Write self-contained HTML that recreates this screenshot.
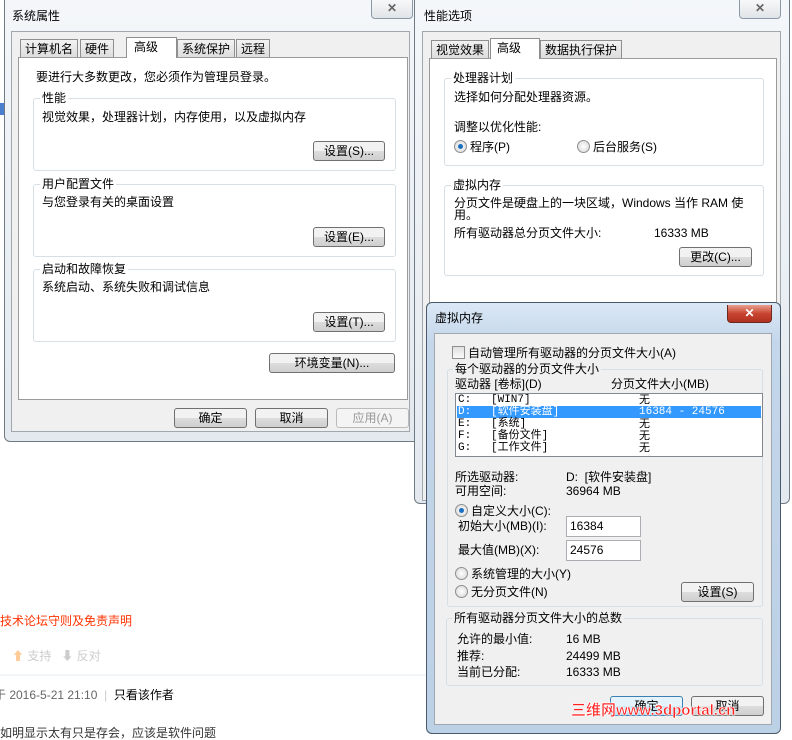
<!DOCTYPE html>
<html><head><meta charset="utf-8"><style>
*{margin:0;padding:0;box-sizing:border-box}
body{width:792px;height:730px;overflow:hidden;background:#fff;position:relative;font:12px "Liberation Sans","Noto Sans CJK SC",sans-serif;color:#000}
.a{position:absolute;white-space:nowrap;line-height:14px}
.frame{position:absolute;background:linear-gradient(#f4f7fa,#e3e9ef);border:1px solid #707a84;border-radius:6px}
.client{position:absolute;background:#f0f0f0;border:1px solid #a0a7ae}
.panel{position:absolute;background:#fff;border:1px solid #9a9a9a}
.tab{position:absolute;height:19px;border:1px solid #8e8f8f;border-bottom:none;background:linear-gradient(#f2f2f2,#dcdcdc);padding:2px 4px;line-height:14px}
.tab.on{background:#fff;height:21px;z-index:2}
.grp{position:absolute;border:1px solid #d5dfe5;border-radius:3px}
.btn{position:absolute;height:20px;border:1px solid #707070;border-radius:3px;background:linear-gradient(#f2f2f2 50%,#dddddd 50%,#cfcfcf);text-align:center;line-height:18px}
.close{position:absolute;border:1px solid #8c9aa8;border-top:none;border-radius:0 0 4px 4px;background:linear-gradient(#f8f8f8,#e0e4e8);color:#666;text-align:center;font-weight:bold;line-height:16px}
.radio{position:absolute;width:13px;height:13px;border-radius:50%;border:1px solid #8e8f8f;background:radial-gradient(#fff,#d4d4d4)}
.radio.on::after{content:"";position:absolute;left:3px;top:3px;width:5px;height:5px;border-radius:50%;background:#1a6fc0}
.inp{position:absolute;background:#fff;border:1px solid #abadb3;padding:2px 3px;line-height:14px}
</style></head><body>
<div class="a" style="left:0;top:614px;color:#ff3300">技术论坛守则及免责声明</div>
<div class="a" style="left:12px;top:649px;color:#ccc"><span style="color:#fc9">⬆</span> 支持 &nbsp; ⬇ 反对</div>
<div style="position:absolute;left:0;top:674px;width:430px;height:2px;background:#f3f6f9"></div>
<div class="a" style="left:-6px;top:688px;color:#666">于 2016-5-21 21:10 &nbsp;<span style="color:#ccc">|</span>&nbsp; <span style="color:#000">只看该作者</span></div>
<div class="a" style="left:0;top:726px;color:#333">如明显示太有只是存会，应该是软件问题</div>
<div style="position:absolute;left:0;top:103px;width:5px;height:12px;background:#4a7fd0"></div>

<div class="frame" style="left:4px;top:-6px;width:416px;height:448px"></div>
<div class="a" style="left:12px;top:9px">系统属性</div>
<div class="close" style="left:371px;top:0;width:42px;height:19px">✕</div>
<div class="client" style="left:11px;top:31px;width:399px;height:401px"></div>
<div class="tab" style="left:20px;top:39px">计算机名</div>
<div class="tab" style="left:80px;top:39px">硬件</div>
<div class="tab on" style="left:126px;top:37px;width:51px;padding-left:7px">高级</div>
<div class="tab" style="left:177px;top:39px">系统保护</div>
<div class="tab" style="left:236px;top:39px">远程</div>
<div class="panel" style="left:18px;top:57px;width:390px;height:343px"></div>
<div class="a" style="left:36px;top:70px">要进行大多数更改，您必须作为管理员登录。</div>
<div class="grp" style="left:33px;top:98px;width:363px;height:73px"></div>
<div class="a" style="left:40px;top:91px;background:#fff;padding:0 2px">性能</div>
<div class="a" style="left:42px;top:110px">视觉效果，处理器计划，内存使用，以及虚拟内存</div>
<div class="btn" style="left:313px;top:141px;width:72px">设置(S)...</div>
<div class="grp" style="left:33px;top:184px;width:363px;height:73px"></div>
<div class="a" style="left:40px;top:177px;background:#fff;padding:0 2px">用户配置文件</div>
<div class="a" style="left:42px;top:195px">与您登录有关的桌面设置</div>
<div class="btn" style="left:313px;top:227px;width:72px">设置(E)...</div>
<div class="grp" style="left:33px;top:269px;width:363px;height:73px"></div>
<div class="a" style="left:40px;top:262px;background:#fff;padding:0 2px">启动和故障恢复</div>
<div class="a" style="left:42px;top:280px">系统启动、系统失败和调试信息</div>
<div class="btn" style="left:313px;top:312px;width:72px">设置(T)...</div>
<div class="btn" style="left:269px;top:353px;width:126px">环境变量(N)...</div>
<div class="btn" style="left:174px;top:408px;width:73px">确定</div>
<div class="btn" style="left:255px;top:408px;width:73px">取消</div>
<div class="btn" style="left:336px;top:408px;width:73px;color:#999;border-color:#bbb;background:#f4f4f4">应用(A)</div>

<div class="frame" style="left:414px;top:-6px;width:376px;height:510px"></div>
<div class="a" style="left:424px;top:9px">性能选项</div>
<div class="close" style="left:739px;top:0;width:42px;height:19px">✕</div>
<div class="client" style="left:422px;top:31px;width:359px;height:470px"></div>
<div class="tab" style="left:431px;top:40px">视觉效果</div>
<div class="tab on" style="left:490px;top:38px;width:50px;padding-left:6px">高级</div>
<div class="tab" style="left:540px;top:40px">数据执行保护</div>
<div class="panel" style="left:429px;top:58px;width:348px;height:440px"></div>
<div class="grp" style="left:444px;top:78px;width:320px;height:88px"></div>
<div class="a" style="left:451px;top:71px;background:#fff;padding:0 2px">处理器计划</div>
<div class="a" style="left:454px;top:90px">选择如何分配处理器资源。</div>
<div class="a" style="left:454px;top:120px">调整以优化性能:</div>
<div class="radio on" style="left:454px;top:140px"></div>
<div class="a" style="left:470px;top:140px">程序(P)</div>
<div class="radio" style="left:577px;top:140px"></div>
<div class="a" style="left:593px;top:140px">后台服务(S)</div>
<div class="grp" style="left:444px;top:185px;width:320px;height:91px"></div>
<div class="a" style="left:451px;top:178px;background:#fff;padding:0 2px">虚拟内存</div>
<div class="a" style="left:454px;top:196px">分页文件是硬盘上的一块区域，Windows 当作 RAM 使</div>
<div class="a" style="left:454px;top:208px">用。</div>
<div class="a" style="left:454px;top:226px">所有驱动器总分页文件大小:</div>
<div class="a" style="left:654px;top:226px">16333 MB</div>
<div class="btn" style="left:679px;top:247px;width:73px">更改(C)...</div>

<div class="frame" style="left:426px;top:302px;width:355px;height:432px;background:linear-gradient(#dbe8f6,#c3d6ea 40px,#bcd0e6);border-color:#4a5a6a"></div>
<div class="a" style="left:435px;top:311px">虚拟内存</div>
<div class="close" style="left:727px;top:305px;width:45px;height:18px;background:linear-gradient(#e8a090,#c84530 50%,#b03020);color:#fff;border-color:#6a2a20">✕</div>
<div class="client" style="left:434px;top:333px;width:338px;height:392px"></div>
<div style="position:absolute;left:452px;top:346px;width:13px;height:13px;border:1px solid #8e8f8f;background:linear-gradient(#e0e0e0,#fafafa)"></div>
<div class="a" style="left:468px;top:346px">自动管理所有驱动器的分页文件大小(A)</div>
<div class="grp" style="left:447px;top:369px;width:316px;height:238px"></div>
<div class="a" style="left:453px;top:362px;background:#f0f0f0;padding:0 2px">每个驱动器的分页文件大小</div>
<div class="a" style="left:455px;top:377px">驱动器 [卷标](D)</div>
<div class="a" style="left:611px;top:377px">分页文件大小(MB)</div>
<div style="position:absolute;left:455px;top:393px;width:308px;height:64px;background:#fff;border:1px solid #828790"></div>
<div style="position:absolute;left:457px;top:406px;width:304px;height:12px;background:#3399ff"></div>
<div class="a" style="left:458px;top:394px;line-height:12px;font-family:'Liberation Mono','Noto Sans CJK SC',monospace;font-size:11px">C:&nbsp;&nbsp;&nbsp;[WIN7]</div>
<div class="a" style="left:458px;top:406px;line-height:12px;color:#fff;font-family:'Liberation Mono','Noto Sans CJK SC',monospace;font-size:11px">D:&nbsp;&nbsp;&nbsp;[软件安装盘]</div>
<div class="a" style="left:458px;top:418px;line-height:12px;font-family:'Liberation Mono','Noto Sans CJK SC',monospace;font-size:11px">E:&nbsp;&nbsp;&nbsp;[系统]</div>
<div class="a" style="left:458px;top:430px;line-height:12px;font-family:'Liberation Mono','Noto Sans CJK SC',monospace;font-size:11px">F:&nbsp;&nbsp;&nbsp;[备份文件]</div>
<div class="a" style="left:458px;top:442px;line-height:12px;font-family:'Liberation Mono','Noto Sans CJK SC',monospace;font-size:11px">G:&nbsp;&nbsp;&nbsp;[工作文件]</div>
<div class="a" style="left:639px;top:394px;line-height:12px;font-size:11px">无</div>
<div class="a" style="left:639px;top:406px;line-height:12px;color:#fff;font-family:'Liberation Mono',monospace;font-size:11px">16384 - 24576</div>
<div class="a" style="left:639px;top:418px;line-height:12px;font-size:11px">无</div>
<div class="a" style="left:639px;top:430px;line-height:12px;font-size:11px">无</div>
<div class="a" style="left:639px;top:442px;line-height:12px;font-size:11px">无</div>
<div class="a" style="left:455px;top:470px">所选驱动器:</div>
<div class="a" style="left:566px;top:470px">D:&nbsp; [软件安装盘]</div>
<div class="a" style="left:455px;top:484px">可用空间:</div>
<div class="a" style="left:566px;top:484px">36964 MB</div>
<div class="radio on" style="left:455px;top:504px"></div>
<div class="a" style="left:471px;top:504px">自定义大小(C):</div>
<div class="a" style="left:458px;top:519px">初始大小(MB)(I):</div>
<div class="inp" style="left:566px;top:516px;width:75px;height:21px">16384</div>
<div class="a" style="left:458px;top:543px">最大值(MB)(X):</div>
<div class="inp" style="left:566px;top:540px;width:75px;height:21px">24576</div>
<div class="radio" style="left:455px;top:567px"></div>
<div class="a" style="left:471px;top:567px">系统管理的大小(Y)</div>
<div class="radio" style="left:455px;top:585px"></div>
<div class="a" style="left:471px;top:585px">无分页文件(N)</div>
<div class="btn" style="left:681px;top:582px;width:73px">设置(S)</div>
<div class="grp" style="left:446px;top:618px;width:317px;height:68px"></div>
<div class="a" style="left:452px;top:611px;background:#f0f0f0;padding:0 2px">所有驱动器分页文件大小的总数</div>
<div class="a" style="left:457px;top:632px">允许的最小值:</div><div class="a" style="left:566px;top:632px">16 MB</div>
<div class="a" style="left:457px;top:649px">推荐:</div><div class="a" style="left:566px;top:649px">24499 MB</div>
<div class="a" style="left:457px;top:665px">当前已分配:</div><div class="a" style="left:566px;top:665px">16333 MB</div>
<div class="btn" style="left:610px;top:696px;width:73px;border-color:#3c7fb1;background:linear-gradient(#e5f4fc 50%,#c4e5f6 50%,#a9d9f2)">确定</div>
<div class="btn" style="left:691px;top:696px;width:73px">取消</div>
<div class="a" style="left:571px;top:704px;font-size:15px;font-weight:bold;color:#ff2020;-webkit-text-stroke:0.5px #fff;text-shadow:0 0 2px #fff">三维网www.3dportal.cn</div>
</body></html>
